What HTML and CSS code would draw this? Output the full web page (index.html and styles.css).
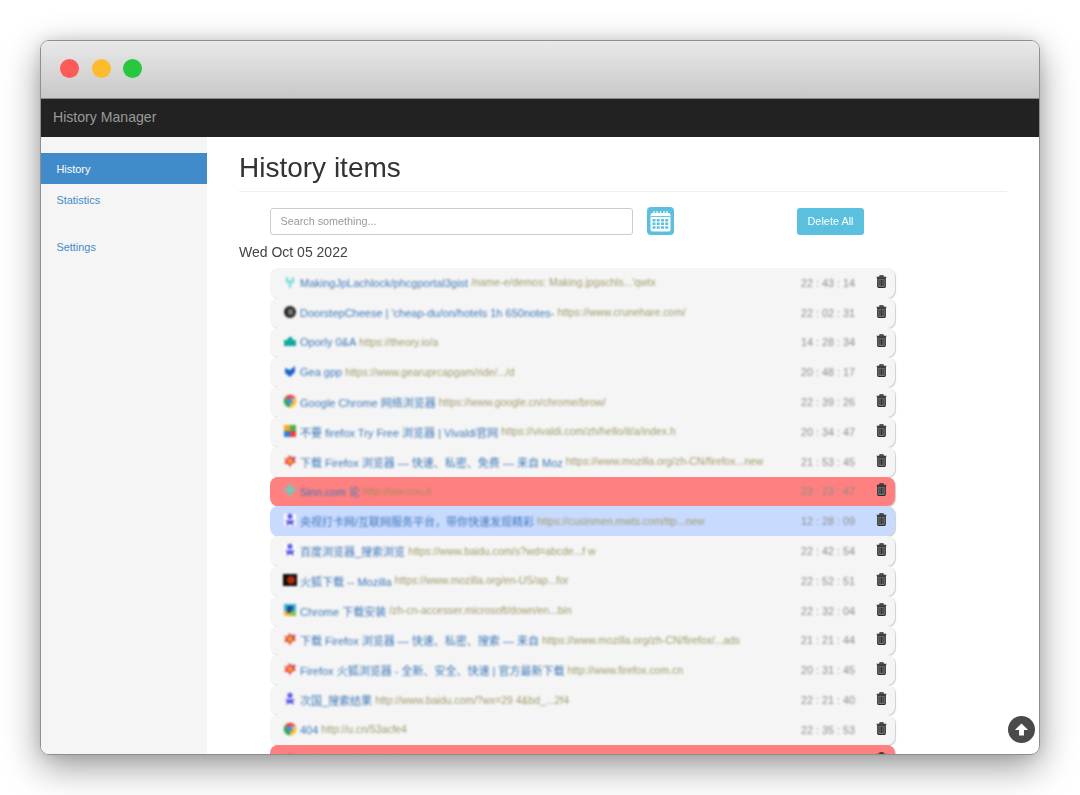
FILE: index.html
```html
<!DOCTYPE html>
<html lang="en">
<head>
<meta charset="utf-8">
<title>History Manager</title>
<link rel="stylesheet" href="styles.css">
</head>
<body>
<svg class="defs" width="0" height="0" aria-hidden="true">
  <symbol id="trash" viewBox="0 0 12 14">
    <path d="M4.3 1.9V.9h3.4v1M.7 2.4h10.6" fill="none" stroke="#2a2a2a" stroke-width="1.2"/>
    <path d="M1.9 3.3h8.2v9.1c0 .7-.5 1.1-1.1 1.1H3c-.6 0-1.1-.4-1.1-1.1z" fill="#777" stroke="#2a2a2a" stroke-width="1.2"/>
    <path d="M4.3 5v6.8M6 5v6.8M7.7 5v6.8" stroke="#2a2a2a" stroke-width="1"/>
  </symbol>
  <symbol id="chrome" viewBox="0 0 14 14">
    <path d="M7 7 2 3.2A6.4 6.4 0 0 1 13 4.5H7z" fill="#e8453c"/>
    <path d="M7 7l6-2.5A6.4 6.4 0 0 1 7 13.4z" fill="#fbc02d"/>
    <path d="M7 7v6.4A6.4 6.4 0 0 1 2 3.2z" fill="#35a853"/>
    <circle cx="7" cy="7" r="2.8" fill="#4a8cf0"/>
  </symbol>
  <symbol id="flame" viewBox="0 0 14 14">
    <path d="M6.4 .8 8 4l4.9-1.4-1.3 4.2 1.4 2-4 .8L7 13.4 5.4 10.2 1 9.4l2-3L.8 4l3.7.6z" fill="#e8433f"/>
    <path d="M4.5 5h5l-.5 4h-4z" fill="#f6a623"/>
    <path d="M8 2.5l3 .5-1.5 3z" fill="#8a55c8"/>
  </symbol>
  <symbol id="paw" viewBox="0 0 14 14">
    <circle cx="7" cy="3.4" r="2.6" fill="#5a5ae6"/>
    <path d="M2 7.2h10L10 9.4l1 3.4-4-1.8-4 1.8 1-3.4z" fill="#5a5ae6"/>
  </symbol>
</svg>

<div class="window">
  <header class="titlebar">
    <span class="light light-red"></span>
    <span class="light light-yellow"></span>
    <span class="light light-green"></span>
  </header>
  <nav class="navbar">History Manager</nav>
  <div class="content">
    <aside class="sidebar">
      <a class="side-link active">History</a>
      <a class="side-link">Statistics</a>
      <a class="side-link side-gap">Settings</a>
    </aside>
    <main class="main">
      <h1 class="heading">History items</h1>
      <div class="toolbar">
        <input class="search" type="text" placeholder="Search something...">
        <button class="cal-btn" aria-label="Calendar">
          <svg width="23" height="23" viewBox="0 0 23 23">
            <rect x="1.5" y="3" width="20" height="18.5" rx="2" fill="#fff"/>
            <path d="M5 1v4M8 1v4M11.5 1v4M15 1v4M18 1v4" stroke="#fff" stroke-width="1.2"/>
            <path d="M1.5 6.6h20" stroke="#5bc0de" stroke-width="1"/>
            <path d="M3.5 9h3v2.5h-3zM7.7 9h3v2.5h-3zM12 9h3v2.5h-3zM16.2 9h3v2.5h-3zM3.5 12.6h3v2.5h-3zM7.7 12.6h3v2.5h-3zM12 12.6h3v2.5h-3zM16.2 12.6h3v2.5h-3zM3.5 16.2h3v2.5h-3zM7.7 16.2h3v2.5h-3zM12 16.2h3v2.5h-3zM16.2 16.2h3v2.5h-3z" fill="#5bc0de"/>
          </svg>
        </button>
        <button class="delete-all">Delete All</button>
      </div>
      <div class="date">Wed Oct 05 2022</div>
      <ul class="rows">
        <li class="row"><svg class="fav" viewBox="0 0 14 14"><path d="M4 2v5h6V2M7 5v8" fill="none" stroke="#6fdcd8" stroke-width="2"/></svg><span class="title">MakingJpLachlock/phcgportal3gist</span><span class="url">/name-e/demos: Making.jpgachls...'qwtx</span><span class="time">22 : 43 : 14</span><svg class="del"><use href="#trash"/></svg></li>
        <li class="row"><svg class="fav" viewBox="0 0 14 14"><circle cx="7" cy="7" r="6" fill="#222"/><rect x="5" y="4" width="5" height="6" fill="#777"/></svg><span class="title">DoorstepCheese | 'cheap-du/on/hotels 1h 650notes-</span><span class="url">https://www.crunehare.com/</span><span class="time">22 : 02 : 31</span><svg class="del"><use href="#trash"/></svg></li>
        <li class="row"><svg class="fav" viewBox="0 0 14 14"><path d="M1 12V6h3l2-3h3l1 3h3v6z" fill="#12a89d"/></svg><span class="title">Oporly 0&amp;A</span><span class="url">https://theory.io/a</span><span class="time">14 : 28 : 34</span><svg class="del"><use href="#trash"/></svg></li>
        <li class="row"><svg class="fav" viewBox="0 0 14 14"><path d="M2 4l5 2 5-4v6l-5 5-5-4z" fill="#1d66c9"/></svg><span class="title">Gea gpp</span><span class="url">https://www.gearuprcapgam/ride/.../d</span><span class="time">20 : 48 : 17</span><svg class="del"><use href="#trash"/></svg></li>
        <li class="row"><svg class="fav" viewBox="0 0 14 14"><use href="#chrome"/></svg><span class="title">Google Chrome 网络浏览器</span><span class="url">https://www.google.cn/chrome/brow/</span><span class="time">22 : 39 : 26</span><svg class="del"><use href="#trash"/></svg></li>
        <li class="row"><svg class="fav" viewBox="0 0 14 14"><path d="M1 1h6v6H1z" fill="#f5a623"/><path d="M7 1h6v6H7z" fill="#4caf50"/><path d="M1 7h6v6H1z" fill="#2f7fe0"/><path d="M7 7h6v6H7z" fill="#e8433f"/></svg><span class="title">不要 firefox Try Free 浏览器 | Vivaldi官网</span><span class="url">https://vivaldi.com/zh/hello/it/a/index.h</span><span class="time">20 : 34 : 47</span><svg class="del"><use href="#trash"/></svg></li>
        <li class="row"><svg class="fav" viewBox="0 0 14 14"><use href="#flame"/></svg><span class="title">下载 Firefox 浏览器 — 快速、私密、免费 — 来自 Moz</span><span class="url">https://www.mozilla.org/zh-CN/firefox...new</span><span class="time">21 : 53 : 45</span><svg class="del"><use href="#trash"/></svg></li>
        <li class="row row-red"><svg class="fav" viewBox="0 0 14 14"><path d="M7 1v12M1 7h12" stroke="#5fd6c0" stroke-width="3"/></svg><span class="title">Sinn.com 论</span><span class="url">http://ww.cou.it</span><span class="time">23 : 23 : 47</span><svg class="del"><use href="#trash"/></svg></li>
        <li class="row row-blue"><svg class="fav" viewBox="0 0 14 14"><rect x="1" y="1" width="12" height="12" fill="#fff"/><use href="#paw"/></svg><span class="title">央视打卡网/互联网服务平台，带你快速发现精彩</span><span class="url">https://cusinmen.mwts.com/ttp...new</span><span class="time">12 : 28 : 09</span><svg class="del"><use href="#trash"/></svg></li>
        <li class="row"><svg class="fav" viewBox="0 0 14 14"><rect x="1" y="1" width="12" height="12" fill="#fff"/><use href="#paw"/></svg><span class="title">百度浏览器_搜索浏览</span><span class="url">https://www.baidu.com/s?wd=abcde...f w</span><span class="time">22 : 42 : 54</span><svg class="del"><use href="#trash"/></svg></li>
        <li class="row"><svg class="fav" viewBox="0 0 14 14"><rect x="0" y="1" width="14" height="12" fill="#0a0a0a"/><circle cx="8" cy="7" r="4" fill="#b4280c"/></svg><span class="title">火狐下载 -- Mozilla</span><span class="url">https://www.mozilla.org/en-US/ap...for</span><span class="time">22 : 52 : 51</span><svg class="del"><use href="#trash"/></svg></li>
        <li class="row"><svg class="fav" viewBox="0 0 14 14"><rect x="1" y="1" width="12" height="12" rx="2" fill="#f5b32e"/><path d="M1 1h12v7H1z" fill="#3bb1dd"/><path d="M4 3h6v7H4z" fill="#1a4f92"/><path d="M8 8h5v5H8z" fill="#8bc34a"/></svg><span class="title">Chrome 下载安装</span><span class="url">/zh-cn-accesser.microsoft/down/en...bin</span><span class="time">22 : 32 : 04</span><svg class="del"><use href="#trash"/></svg></li>
        <li class="row"><svg class="fav" viewBox="0 0 14 14"><use href="#flame"/></svg><span class="title">下载 Firefox 浏览器 — 快速、私密、搜索 — 来自</span><span class="url">https://www.mozilla.org/zh-CN/firefox/...ads</span><span class="time">21 : 21 : 44</span><svg class="del"><use href="#trash"/></svg></li>
        <li class="row"><svg class="fav" viewBox="0 0 14 14"><use href="#flame"/></svg><span class="title">Firefox 火狐浏览器 - 全新、安全、快速 | 官方最新下载</span><span class="url">http://www.firefox.com.cn</span><span class="time">20 : 31 : 45</span><svg class="del"><use href="#trash"/></svg></li>
        <li class="row"><svg class="fav" viewBox="0 0 14 14"><use href="#paw"/></svg><span class="title">次国_搜索结果</span><span class="url">http://www.baidu.com/?wx=29 4&amp;bd_...2f4</span><span class="time">22 : 21 : 40</span><svg class="del"><use href="#trash"/></svg></li>
        <li class="row"><svg class="fav" viewBox="0 0 14 14"><use href="#chrome"/></svg><span class="title">404</span><span class="url">http://u.cn/53acfe4</span><span class="time">22 : 35 : 53</span><svg class="del"><use href="#trash"/></svg></li>
        <li class="row row-red"><svg class="fav" viewBox="0 0 14 14"><use href="#flame"/></svg><span class="title">百度一下，你就知道</span><span class="url">https://www.baidu.com/</span><span class="time">22 : 11 : 08</span><svg class="del"><use href="#trash"/></svg></li>
      </ul>
    </main>
    <button class="to-top" aria-label="Back to top">
      <svg width="15" height="15" viewBox="0 0 16 16"><path d="M8 1.5 15 8.6H10.6V14.5H5.4V8.6H1z" fill="#fff"/></svg>
    </button>
  </div>
</div>
</body>
</html>
```

FILE: styles.css
```css
* { box-sizing: border-box; }

html, body {
  margin: 0;
  height: 100%;
  background: #fff;
  overflow: hidden;
}

body {
  padding: 40px;
  font-family: "Liberation Sans", Arial, sans-serif;
  color: #333;
}

.defs { position: absolute; }

.window {
  position: relative;
  display: flex;
  flex-direction: column;
  width: 1000px;
  height: 715px;
  background: #fff;
  border: 1px solid #8e8e8e;
  border-radius: 9px;
  overflow: hidden;
  filter: blur(0.4px);
}

/* the shadow lies behind the window, which clips its own content */
body::before {
  content: "";
  position: absolute;
  left: 40px;
  top: 40px;
  width: 1000px;
  height: 715px;
  border-radius: 9px;
  box-shadow: 0 12px 36px rgba(0, 0, 0, 0.4), 0 0 14px rgba(0, 0, 0, 0.1);
}

.titlebar {
  display: flex;
  align-items: center;
  gap: 12.5px;
  flex: 0 0 58px;
  padding: 0 0 2px 19px;
  background: linear-gradient(#e9e9e9, #c8c8c8);
  border-bottom: 1px solid #8a8a8a;
}

.light {
  width: 19px;
  height: 19px;
  border-radius: 50%;
}
.light-red { background: #fc5b57; }
.light-yellow { background: #fdbb2d; }
.light-green { background: #27c83f; }

.navbar {
  flex: 0 0 38px;
  padding-left: 12px;
  line-height: 36px;
  font-size: 14.1px;
  color: #9a9a9a;
  background: #222;
}

.content {
  position: relative;
  display: flex;
  flex: 1;
  min-height: 0;
}

.sidebar {
  display: flex;
  flex-direction: column;
  flex: 0 0 166px;
  padding-top: 16px;
  background: #f5f5f5;
}

.side-link {
  display: block;
  height: 31px;
  padding: 1px 0 0 15.5px;
  line-height: 31px;
  font-size: 10.9px;
  color: #428bca;
}
.side-link.active {
  color: #fff;
  background: #428bca;
}
.side-gap { margin-top: 16px; }

.main {
  flex: 1;
  min-width: 0;
  padding: 0 32px;
  overflow: hidden;
}

.heading {
  margin: 14px 0 0;
  padding-bottom: 6px;
  height: 41px;
  line-height: 34px;
  font-size: 28px;
  font-weight: 400;
  color: #333;
  border-bottom: 1px solid #eee;
}

.toolbar {
  display: flex;
  align-items: center;
  height: 28px;
  margin-top: 15px;
  padding-left: 31px;
}

.search {
  width: 363px;
  height: 27px;
  padding: 0 9.5px 1px;
  font: 10.8px "Liberation Sans", Arial, sans-serif;
  color: #555;
  background: #fff;
  border: 1px solid #ccc;
  border-radius: 3px;
}
.search::placeholder { color: #999; opacity: 1; }

.cal-btn {
  display: flex;
  align-items: center;
  justify-content: center;
  width: 27px;
  height: 28px;
  margin-left: 14px;
  padding: 0;
  background: #5bc0de;
  border: 0;
  border-radius: 4px;
}

.delete-all {
  width: 67px;
  height: 27px;
  margin-left: 123px;
  padding: 0;
  font: 10.9px "Liberation Sans", Arial, sans-serif;
  color: #fff;
  background: #5bc0de;
  border: 0;
  border-radius: 3px;
}

.date {
  margin-top: 8px;
  line-height: 18px;
  font-size: 14px;
  color: #444;
}

.rows {
  display: flex;
  flex-direction: column;
  width: 625px;
  margin: 7px 0 0 31px;
  padding: 0;
  list-style: none;
}

.row {
  display: flex;
  flex: 0 0 29.8px;
  align-items: center;
  height: 29.8px;
  padding: 0 8px 0 13px;
  white-space: nowrap;
  background: #f5f5f5;
  border-radius: 8px;
  box-shadow: 1px 1px 1px #cfcfcf;
}
.row-red { background: #ff8080; }
.row-blue { background: #c9daff; }

.fav {
  flex: 0 0 14px;
  width: 14px;
  height: 14px;
  margin: -2px 3px 0 0;
  filter: blur(0.8px);
}

.title {
  color: #3e78b8;
  font-family: "Liberation Sans", "Noto Sans CJK SC", sans-serif;
  font-size: 11px;
  filter: blur(0.9px);
}

.url {
  margin-left: 3px;
  color: #a09c6c;
  font-size: 10.4px;
  filter: blur(0.9px);
}
.row-red .url { color: #a88a62; }

.time {
  margin-left: auto;
  width: 57px;
  color: #8c8c8c;
  font-size: 10.8px;
  filter: blur(1px);
}

.del {
  flex: 0 0 11px;
  width: 11px;
  height: 13px;
  margin: -3px 0 0 18px;
}

.to-top {
  position: absolute;
  right: 4px;
  bottom: 11px;
  display: flex;
  align-items: center;
  justify-content: center;
  width: 27px;
  height: 27px;
  padding: 0;
  background: #4a4a4c;
  border: 0;
  border-radius: 50%;
}
```
